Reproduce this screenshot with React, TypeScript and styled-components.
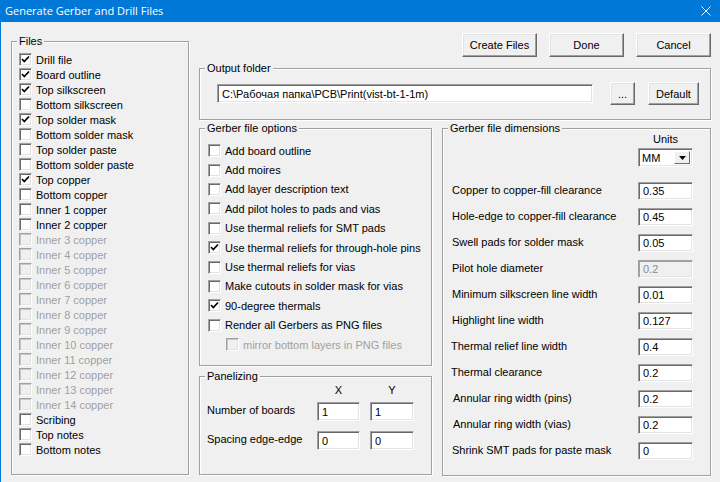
import React from 'react';
import styled, { createGlobalStyle } from 'styled-components';

const GlobalStyle = createGlobalStyle`
  html, body {
    margin: 0;
    padding: 0;
    background: #f0f0f0;
  }
  * {
    box-sizing: border-box;
  }
`;

const Window = styled.div`
  width: 720px;
  height: 482px;
  background: #f0f0f0;
  border-left: 1px solid #0078d7;
  font-family: 'Liberation Sans', Arial, sans-serif;
  font-size: 11px;
  color: #000;
  overflow: hidden;
`;

const TitleBar = styled.div`
  height: 22px;
  background: #0078d7;
  display: flex;
  align-items: center;
  justify-content: space-between;
  padding: 0 9px 0 4px;
`;

const Title = styled.span`
  font-family: 'Open Sans', 'Noto Sans', sans-serif;
  font-size: 11px;
  color: #fff;
  margin-top: -1px;
`;

const CloseGlyph = styled.svg`
  width: 10px;
  height: 10px;
  display: block;
`;

const Body = styled.div`
  display: flex;
  gap: 10px;
  padding: 11px 9px 0 10px;
`;

const RightColumn = styled.div`
  width: 512px;
  display: flex;
  flex-direction: column;
`;

const ButtonRow = styled.div`
  display: flex;
  justify-content: flex-end;
  gap: 12px;
  height: 24px;
`;

const Button = styled.button<{ $w: number; $h?: number }>`
  width: ${(p: { $w: number }) => p.$w}px;
  height: ${(p: { $h?: number }) => p.$h ?? 24}px;
  background: #f0f0f0;
  font-family: 'Liberation Sans', Arial, sans-serif;
  font-size: 11px;
  color: #000;
  padding: 0;
  border: 1px solid;
  border-color: #ffffff #696969 #696969 #ffffff;
  box-shadow: inset -1px -1px 0 #a0a0a0, inset 1px 1px 0 #e3e3e3;
`;

const GroupBox = styled.div<{ $w?: number; $h: number; $mt?: number }>`
  position: relative;
  width: ${(p: { $w?: number }) => (p.$w ? `${p.$w}px` : '100%')};
  height: ${(p: { $h: number }) => p.$h}px;
  margin-top: ${(p: { $mt?: number }) => p.$mt ?? 0}px;
  border: 1px solid #a0a0a0;
  box-shadow: inset 1px 1px 0 #ffffff, 1px 1px 0 #ffffff;
  flex-shrink: 0;
`;

const Legend = styled.span`
  position: absolute;
  top: -8px;
  left: 5px;
  padding: 0 2px;
  line-height: 14px;
  background: #f0f0f0;
`;

const FileList = styled.div`
  display: flex;
  flex-direction: column;
  padding: 10px 0 0 7px;
`;

const OptionList = styled.div`
  display: flex;
  flex-direction: column;
  padding: 12px 0 0 8px;
`;

const CheckRow = styled.div<{ $h: number; $disabled?: boolean; $indent?: number }>`
  display: flex;
  align-items: center;
  gap: 4px;
  height: ${(p: { $h: number }) => p.$h}px;
  padding-left: ${(p: { $indent?: number }) => p.$indent ?? 0}px;
  color: ${(p: { $disabled?: boolean }) => (p.$disabled ? '#a0a0a0' : '#000')};
  white-space: nowrap;
`;

const Box = styled.span<{ $disabled?: boolean }>`
  width: 13px;
  height: 13px;
  flex-shrink: 0;
  display: flex;
  align-items: center;
  justify-content: center;
  background: ${(p: { $disabled?: boolean }) => (p.$disabled ? '#f0f0f0' : '#fff')};
  border: 1px solid;
  border-color: #a0a0a0 #ffffff #ffffff #a0a0a0;
  box-shadow: ${(p: { $disabled?: boolean }) =>
    p.$disabled
      ? 'inset 1px 1px 0 #c8c8c8, inset -1px -1px 0 #e3e3e3'
      : 'inset 1px 1px 0 #696969, inset -1px -1px 0 #e3e3e3'};
`;

const CheckMark = styled.svg`
  width: 9px;
  height: 9px;
  display: block;
`;

const FolderRow = styled.div`
  display: flex;
  align-items: center;
  padding: 13px 0 0 17px;
`;

const Field = styled.input<{ $w: number; $h?: number }>`
  width: ${(p: { $w: number }) => p.$w}px;
  height: ${(p: { $h?: number }) => p.$h ?? 19}px;
  flex-shrink: 0;
  background: #fff;
  border: 1px solid;
  border-color: #a0a0a0 #ffffff #ffffff #a0a0a0;
  box-shadow: inset 1px 1px 0 #696969, inset -1px -1px 0 #e3e3e3;
  font-family: 'Liberation Sans', Arial, sans-serif;
  font-size: 11px;
  color: #000;
  padding: 0 0 0 4px;
  outline: none;

  &:disabled {
    background: #f0f0f0;
    color: #8a8a8a;
    box-shadow: inset 1px 1px 0 #a0a0a0, inset -1px -1px 0 #e3e3e3;
  }
`;

const BottomArea = styled.div`
  display: flex;
  gap: 10px;
  margin-top: 8px;
`;

const LeftStack = styled.div`
  display: flex;
  flex-direction: column;
  width: 233px;
`;

const DimGrid = styled.div`
  display: grid;
  grid-template-columns: 1fr 55px;
  padding: 3px 17px 0 9px;
  align-items: center;
`;

const UnitsLabel = styled.div`
  grid-column: 2;
  text-align: center;
  line-height: 14px;
  height: 14px;
`;

const Select = styled.div`
  grid-column: 2;
  margin-top: 2px;
  margin-bottom: 11px;
  height: 19px;
  display: flex;
  align-items: center;
  justify-content: space-between;
  background: #fff;
  border: 1px solid;
  border-color: #a0a0a0 #ffffff #ffffff #a0a0a0;
  box-shadow: inset 1px 1px 0 #696969, inset -1px -1px 0 #e3e3e3;
  padding: 2px 2px 2px 3px;
`;

const SelectArrow = styled.span`
  width: 16px;
  height: 100%;
  display: flex;
  align-items: center;
  justify-content: center;
  background: #f0f0f0;
  border: 1px solid;
  border-color: #ffffff #696969 #696969 #ffffff;
`;

const DimLabel = styled.div<{ $dx?: number }>`
  height: 26px;
  display: flex;
  align-items: center;
  padding-bottom: 2px;
  margin-left: ${(p: { $dx?: number }) => p.$dx ?? 0}px;
  white-space: nowrap;
`;

const PanelGrid = styled.div`
  display: grid;
  grid-template-columns: 100px 43px 44px;
  column-gap: 10px;
  row-gap: 10px;
  padding: 7px 0 0 7px;
  align-items: center;
`;

const AxisLabel = styled.div`
  text-align: center;
  line-height: 12px;
  margin-bottom: -4px;
`;

const PanelLabel = styled.div`
  margin-top: -3px;
  white-space: nowrap;
`;

const Check = ({ on }: { on?: boolean }) =>
  on ? (
    <CheckMark viewBox="0 0 9 9">
      <path d="M1 4 L3.3 6.5 L8 1.5" fill="none" stroke="#000" strokeWidth="1.7" />
    </CheckMark>
  ) : null;

const files: { label: string; on?: boolean; disabled?: boolean }[] = [
  { label: 'Drill file', on: true },
  { label: 'Board outline', on: true },
  { label: 'Top silkscreen', on: true },
  { label: 'Bottom silkscreen' },
  { label: 'Top solder mask', on: true },
  { label: 'Bottom solder mask' },
  { label: 'Top solder paste' },
  { label: 'Bottom solder paste' },
  { label: 'Top copper', on: true },
  { label: 'Bottom copper' },
  { label: 'Inner 1 copper' },
  { label: 'Inner 2 copper' },
  ...Array.from({ length: 12 }, (_, i) => ({ label: `Inner ${i + 3} copper`, disabled: true })),
  { label: 'Scribing' },
  { label: 'Top notes' },
  { label: 'Bottom notes' },
];

const options: { label: string; on?: boolean; disabled?: boolean; indent?: number }[] = [
  { label: 'Add board outline' },
  { label: 'Add moires' },
  { label: 'Add layer description text' },
  { label: 'Add pilot holes to pads and vias' },
  { label: 'Use thermal reliefs for SMT pads' },
  { label: 'Use thermal reliefs for through-hole pins', on: true },
  { label: 'Use thermal reliefs for vias' },
  { label: 'Make cutouts in solder mask for vias' },
  { label: '90-degree thermals', on: true },
  { label: 'Render all Gerbers as PNG files' },
  { label: 'mirror bottom layers in PNG files', disabled: true, indent: 18 },
];

const dims: { label: string; value: string; disabled?: boolean; dx?: number }[] = [
  { label: 'Copper to copper-fill clearance', value: '0.35' },
  { label: 'Hole-edge to copper-fill clearance', value: '0.45' },
  { label: 'Swell pads for solder mask', value: '0.05' },
  { label: 'Pilot hole diameter', value: '0.2', disabled: true },
  { label: 'Minimum silkscreen line width', value: '0.01' },
  { label: 'Highlight line width', value: '0.127' },
  { label: 'Thermal relief line width', value: '0.4', dx: -1 },
  { label: 'Thermal clearance', value: '0.2', dx: -1 },
  { label: 'Annular ring width (pins)', value: '0.2', dx: 1 },
  { label: 'Annular ring width (vias)', value: '0.2', dx: 1 },
  { label: 'Shrink SMT pads for paste mask', value: '0' },
];

export default function App() {
  return (
    <>
      <GlobalStyle />
      <Window>
        <TitleBar>
          <Title>Generate Gerber and Drill Files</Title>
          <CloseGlyph viewBox="0 0 10 10">
            <path d="M0.5 0.5 L9.5 9.5 M9.5 0.5 L0.5 9.5" stroke="#fff" strokeWidth="1" />
          </CloseGlyph>
        </TitleBar>
        <Body>
          <GroupBox $w={178} $h={434} $mt={8}>
            <Legend>Files</Legend>
            <FileList>
              {files.map((f) => (
                <CheckRow key={f.label} $h={15} $disabled={f.disabled}>
                  <Box $disabled={f.disabled}>
                    <Check on={f.on} />
                  </Box>
                  {f.label}
                </CheckRow>
              ))}
            </FileList>
          </GroupBox>

          <RightColumn>
            <ButtonRow>
              <Button $w={75}>Create Files</Button>
              <Button $w={75}>Done</Button>
              <Button $w={75}>Cancel</Button>
            </ButtonRow>

            <GroupBox $h={52} $mt={11}>
              <Legend>Output folder</Legend>
              <FolderRow>
                <Field $w={376} defaultValue="C:\Рабочая папка\PCB\Print(vist-bt-1-1m)" />
                <Button $w={25} $h={23} style={{ marginLeft: 17 }}>
                  ...
                </Button>
                <Button $w={51} $h={23} style={{ marginLeft: 13 }}>
                  Default
                </Button>
              </FolderRow>
            </GroupBox>

            <BottomArea>
              <LeftStack>
                <GroupBox $h={238}>
                  <Legend>Gerber file options</Legend>
                  <OptionList>
                    {options.map((o) => (
                      <CheckRow key={o.label} $h={19.4} $disabled={o.disabled} $indent={o.indent}>
                        <Box $disabled={o.disabled}>
                          <Check on={o.on} />
                        </Box>
                        {o.label}
                      </CheckRow>
                    ))}
                  </OptionList>
                </GroupBox>

                <GroupBox $h={99} $mt={10}>
                  <Legend>Panelizing</Legend>
                  <PanelGrid>
                    <span />
                    <AxisLabel>X</AxisLabel>
                    <AxisLabel>Y</AxisLabel>
                    <PanelLabel>Number of boards</PanelLabel>
                    <Field $w={43} defaultValue="1" />
                    <Field $w={44} defaultValue="1" />
                    <PanelLabel>Spacing edge-edge</PanelLabel>
                    <Field $w={43} defaultValue="0" />
                    <Field $w={44} defaultValue="0" />
                  </PanelGrid>
                </GroupBox>
              </LeftStack>

              <GroupBox $w={269} $h={348}>
                <Legend>Gerber file dimensions</Legend>
                <DimGrid>
                  <UnitsLabel>Units</UnitsLabel>
                  <Select>
                    <span>MM</span>
                    <SelectArrow>
                      <svg width="7" height="4" viewBox="0 0 7 4">
                        <path d="M0 0 H7 L3.5 4 Z" fill="#000" />
                      </svg>
                    </SelectArrow>
                  </Select>
                  {dims.map((d) => (
                    <React.Fragment key={d.label}>
                      <DimLabel $dx={d.dx}>{d.label}</DimLabel>
                      <Field $w={55} $h={18} defaultValue={d.value} disabled={d.disabled} />
                    </React.Fragment>
                  ))}
                </DimGrid>
              </GroupBox>
            </BottomArea>
          </RightColumn>
        </Body>
      </Window>
    </>
  );
}
